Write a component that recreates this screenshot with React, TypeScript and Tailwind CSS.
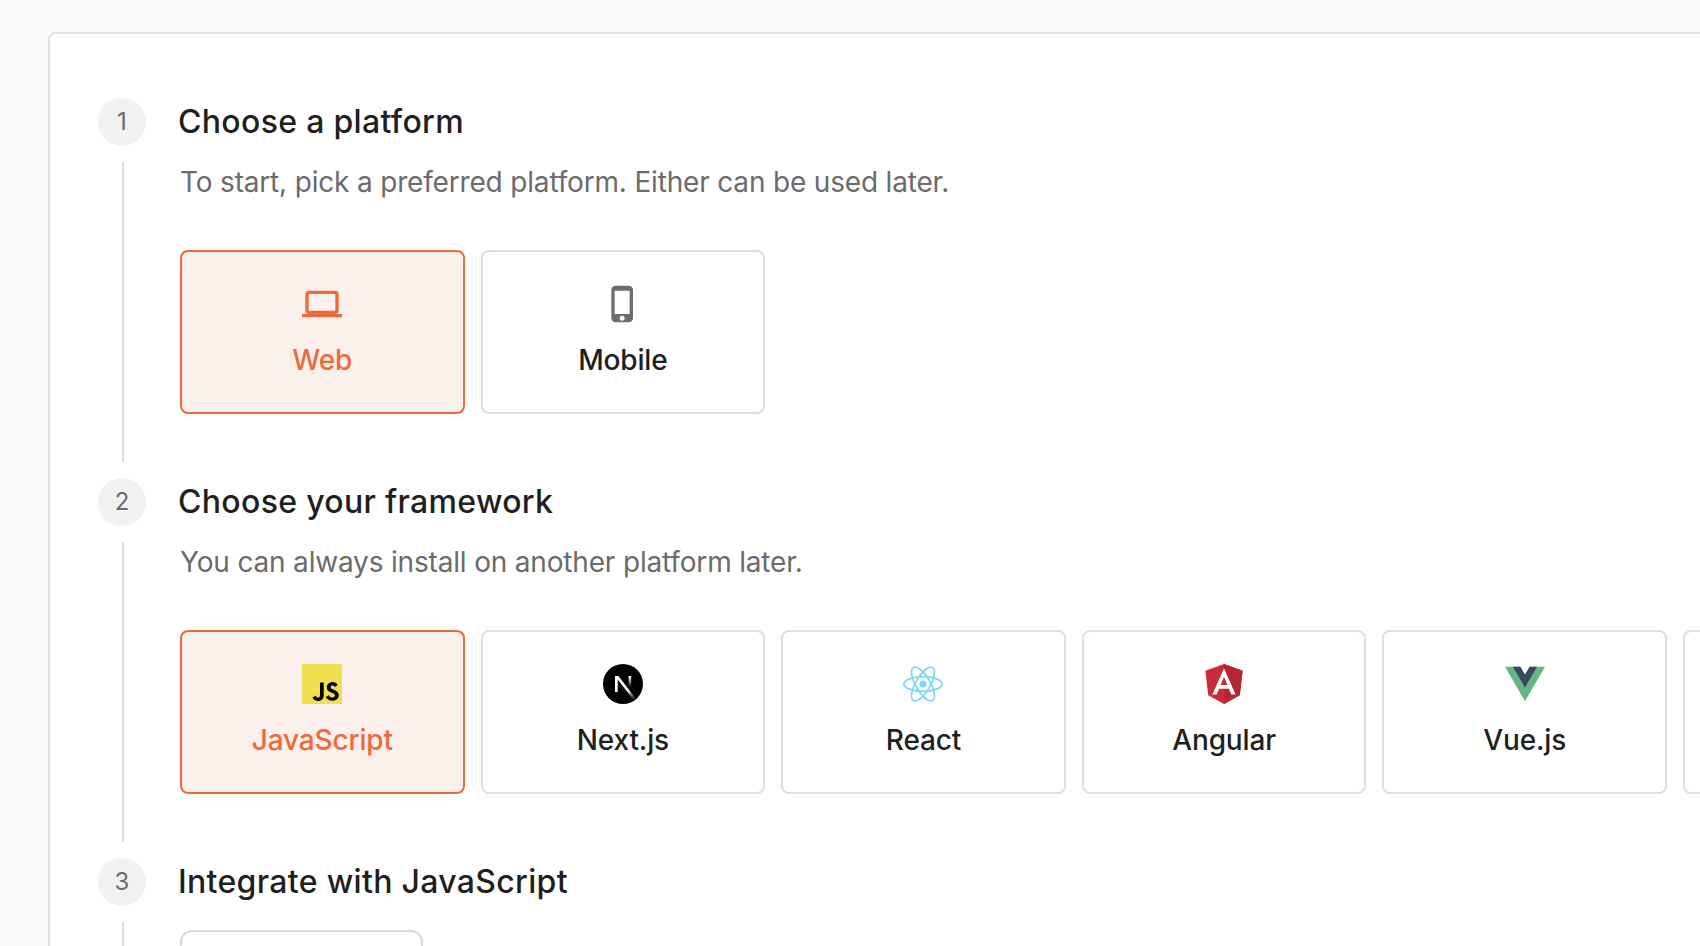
import type { ReactNode } from "react";
import { MdPhoneIphone } from "react-icons/md";
import { SiJavascript } from "react-icons/si";

function LaptopIcon() {
  return (
    <svg className="size-10" viewBox="0 0 24 24" fill="currentColor">
      <path d="M20 18c1.1 0 1.99-.9 1.99-2L22 6c0-1.1-.9-2-2-2H4c-1.1 0-2 .9-2 2v10c0 1.1.9 2 2 2H0v2h24v-2h-4zM4 6h16v10H4V6z" />
    </svg>
  );
}

function JavaScriptLogo() {
  return (
    <div className="grid size-10 place-items-center bg-[linear-gradient(#000,#000)] bg-[length:30px_24px] bg-[position:8px_15px] bg-no-repeat">
      <SiJavascript className="size-10 text-[#f2df4f]" />
    </div>
  );
}

function NextLogo() {
  return (
    <svg className="size-10" viewBox="0 0 180 180" fill="none">
      <defs>
        <linearGradient id="next-diagonal" x1="109" y1="116.5" x2="144.5" y2="160.5" gradientUnits="userSpaceOnUse">
          <stop stopColor="#fff" />
          <stop offset="1" stopColor="#fff" stopOpacity="0" />
        </linearGradient>
        <linearGradient id="next-stem" x1="121" y1="54" x2="120.8" y2="106.9" gradientUnits="userSpaceOnUse">
          <stop stopColor="#fff" />
          <stop offset="1" stopColor="#fff" stopOpacity="0" />
        </linearGradient>
      </defs>
      <circle cx="90" cy="90" r="90" fill="#000" />
      <path d="M149.5 157.5 69.1 54H54v72h12.1V69.4l73.9 95.5a90 90 0 0 0 9.5-7.4Z" fill="url(#next-diagonal)" />
      <path d="M115 54h12v72h-12z" fill="url(#next-stem)" />
    </svg>
  );
}

function ReactLogo() {
  return (
    <svg className="size-10" viewBox="-11.5 -11.5 23 23" fill="none" stroke="#7fd6f8">
      <circle r="2.05" fill="#7fd6f8" stroke="none" />
      <ellipse rx="11" ry="4.2" />
      <ellipse rx="11" ry="4.2" transform="rotate(60)" />
      <ellipse rx="11" ry="4.2" transform="rotate(120)" />
    </svg>
  );
}

function AngularLogo() {
  return (
    <svg className="size-10" viewBox="25 30 200 200">
      <path d="M125 30 31.9 63.2l14.2 123.1L125 230l78.9-43.7 14.2-123.1Z" fill="#cb2b39" />
      <path d="M125 30v200l78.9-43.7 14.2-123.1Z" fill="#b52535" />
      <path
        d="M125 52.1 66.8 182.6h21.7l11.7-29.2h49.4l11.7 29.2H183Zm17 83.3h-34l17-40.9Z"
        fill="#fff"
      />
    </svg>
  );
}

function VueLogo() {
  return (
    <svg className="size-10" viewBox="0 -17.6 256 256">
      <path d="M204.8 0H256L128 220.8 0 0h97.9L128 51.2 157.4 0Z" fill="#64b687" />
      <path d="M50.6 0 128 133.1 204.8 0h-47.4L128 51.2 97.9 0Z" fill="#38495f" />
    </svg>
  );
}

type Option = { label: string; icon: ReactNode };

const platforms: Option[] = [
  { label: "Web", icon: <LaptopIcon /> },
  { label: "Mobile", icon: <MdPhoneIphone className="size-10 text-[#6d6d6b]" /> },
];

const frameworks: Option[] = [
  { label: "JavaScript", icon: <JavaScriptLogo /> },
  { label: "Next.js", icon: <NextLogo /> },
  { label: "React", icon: <ReactLogo /> },
  { label: "Angular", icon: <AngularLogo /> },
  { label: "Vue.js", icon: <VueLogo /> },
  { label: "", icon: null },
];

function OptionCard({ label, icon, selected }: Option & { selected: boolean }) {
  return (
    <button
      className={`flex h-[164px] w-[284.6px] shrink-0 flex-col items-center gap-4 rounded-lg border-2 pt-8 ${
        selected ? "border-[#ed6a3a] bg-[#fcf0ed] text-[#ed6a3a]" : "border-[#dfdfdf] bg-white text-[#1f1f1f]"
      }`}
    >
      {icon}
      <span className="text-[28px] leading-10 font-medium tracking-[-0.006em]">{label}</span>
    </button>
  );
}

function OptionRow({ options }: { options: Option[] }) {
  return (
    <div className="mt-12 flex gap-4">
      {options.map((option, index) => (
        <OptionCard key={option.label} {...option} selected={index === 0} />
      ))}
    </div>
  );
}

type StepProps = { number: number; title: string; description?: string; children: ReactNode };

function Step({ number, title, description, children }: StepProps) {
  return (
    <section className="flex h-[364px] gap-8">
      <div className="flex w-12 shrink-0 flex-col items-center gap-4">
        <div className="grid size-12 shrink-0 place-items-center rounded-full bg-[#f1f1f1] text-2xl text-[#6b6b6b]">
          {number}
        </div>
        <div className="ml-0.5 w-0.5 flex-1 bg-[#dedede]" />
      </div>
      <div className="pl-0.5">
        <h2 className="-ml-0.5 text-[32px] leading-[48px] font-medium tracking-[0.01em] whitespace-nowrap text-[#1f1f1f]">
          {title}
        </h2>
        {description && (
          <p className="mt-4 text-[28px] leading-10 tracking-[-0.00625em] whitespace-nowrap text-[#6b6b6b]">
            {description}
          </p>
        )}
        {children}
      </div>
    </section>
  );
}

export default function App() {
  return (
    <div className="h-[946px] w-[1700px] overflow-hidden bg-[#f8f8f6] pt-8 pl-12 font-['Inter',sans-serif] antialiased">
      <main className="flex h-[1400px] w-[2000px] flex-col gap-4 rounded-lg border-2 border-[#e1e1df] bg-white pt-16 pl-12">
        <Step number={1} title="Choose a platform" description="To start, pick a preferred platform. Either can be used later.">
          <OptionRow options={platforms} />
        </Step>
        <Step number={2} title="Choose your framework" description="You can always install on another platform later.">
          <OptionRow options={frameworks} />
        </Step>
        <Step number={3} title="Integrate with JavaScript">
          <div className="mt-6 h-20 w-[243px] rounded-xl border-2 border-[#d9d9d6]" />
        </Step>
      </main>
    </div>
  );
}
